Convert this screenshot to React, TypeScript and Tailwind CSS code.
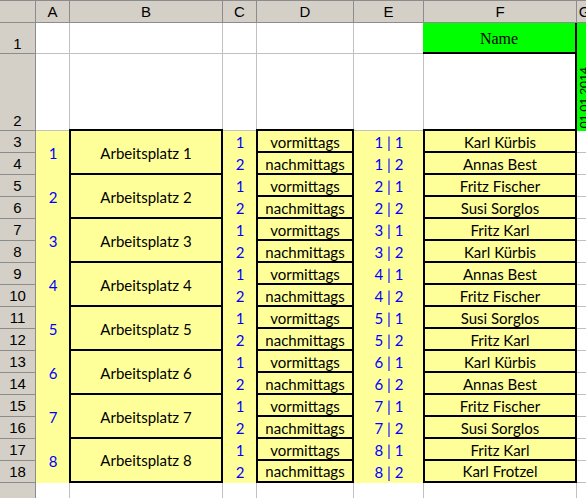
const names = [
  'Karl Kürbis',
  'Annas Best',
  'Fritz Fischer',
  'Susi Sorglos',
  'Fritz Karl',
  'Karl Kürbis',
  'Annas Best',
  'Fritz Fischer',
  'Susi Sorglos',
  'Fritz Karl',
  'Karl Kürbis',
  'Annas Best',
  'Fritz Fischer',
  'Susi Sorglos',
  'Fritz Karl',
  'Karl Frotzel',
];

const head =
  "flex items-center justify-center bg-[#d4d0c8] border-t border-r border-b border-[#8c8c8c] text-[15px] leading-none text-black";
const rowHead =
  "flex justify-center bg-[#d4d0c8] border-r border-b border-[#8c8c8c] text-[15px] leading-none text-black";
const cell = "bg-white border-r border-b border-[#c0c0c0]";
const yellow =
  "flex items-center justify-center bg-[#ffff99] text-[15px] leading-none text-[#0000ff] font-['Lato',sans-serif]";
const box =
  "flex items-center justify-center bg-[#ffff99] border-black border-l-2 border-r-2 border-t-2 -ml-px -mt-[2px] text-[15px] leading-none text-black font-['Lato',sans-serif]";

export default function App() {
  const body = names.map((name, i) => {
    const place = Math.floor(i / 2) + 1;
    const shift = (i % 2) + 1;
    const last = i === names.length - 1;
    return [
      <div key={`h${i}`} className={`${rowHead} items-center`}>
        {i + 3}
      </div>,
      i % 2 === 0 && (
        <div key={`a${i}`} className={`${yellow} row-span-2`}>
          {place}
        </div>
      ),
      i % 2 === 0 && (
        <div key={`b${i}`} className={`${box} row-span-2 ${i === 14 ? 'border-b-2' : ''}`}>
          Arbeitsplatz {place}
        </div>
      ),
      <div key={`c${i}`} className={yellow}>
        {shift}
      </div>,
      <div key={`d${i}`} className={`${box} ${last ? 'border-b-2' : ''}`}>
        {shift === 1 ? 'vormittags' : 'nachmittags'}
      </div>,
      <div key={`e${i}`} className={yellow}>
        {place} | {shift}
      </div>,
      <div key={`f${i}`} className={`${box} ${last ? 'border-b-2' : ''}`}>
        {name}
      </div>,
      <div key={`g${i}`} className={cell} />,
    ];
  });

  return (
    <div className="w-[586px] h-[498px] overflow-hidden bg-white font-['Liberation_Sans',Arial,sans-serif]">
      <div className="grid w-[593px] grid-cols-[36px_34px_153px_34px_97px_70px_153px_16px] grid-rows-[23px_31px_77px_repeat(16,22px)_22px]">
        {/* column header */}
        <div className={head} />
        {['A', 'B', 'C', 'D', 'E', 'F', 'G'].map((c) => (
          <div key={c} className={head}>
            {c}
          </div>
        ))}

        {/* row 1 */}
        <div className={`${rowHead} items-end pb-[2px]`}>1</div>
        <div className={cell} />
        <div className={cell} />
        <div className={cell} />
        <div className={cell} />
        <div className={cell} />
        <div className="-ml-px flex items-center justify-center bg-[#00ff00] border-r-2 border-b-2 border-black pt-[3px] text-[16px] leading-none text-black font-['Liberation_Serif',serif]">
          Name
        </div>
        <div className="bg-[#00ff00]" />

        {/* row 2 */}
        <div className={`${rowHead} items-end pb-[2px]`}>2</div>
        <div className={cell} />
        <div className={cell} />
        <div className={cell} />
        <div className={cell} />
        <div className={cell} />
        <div className="bg-white border-r-2 border-black" />
        <div className="flex items-end bg-[#00ff00] pb-[3px] pl-px">
          <span className="[writing-mode:vertical-rl] rotate-180 whitespace-nowrap text-[12px] leading-none text-black font-['Lato',sans-serif]">
            01.01.2014
          </span>
        </div>

        {body}

        {/* row 19, only its top shows */}
        <div className={rowHead} />
        {[0, 1, 2, 3, 4, 5, 6].map((k) => (
          <div key={k} className={cell} />
        ))}
      </div>
    </div>
  );
}
